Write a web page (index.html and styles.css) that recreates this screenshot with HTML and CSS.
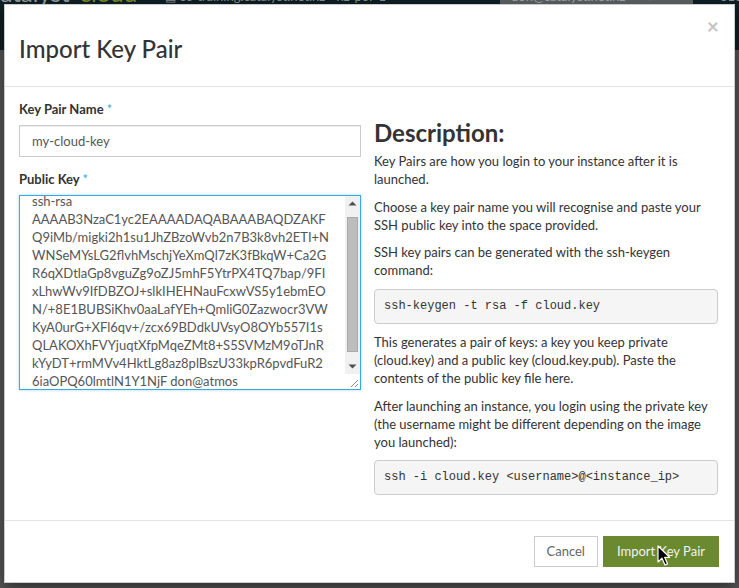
FILE: index.html
```html
<!DOCTYPE html>
<html lang="en">
<head>
<meta charset="utf-8">
<title>Import Key Pair</title>
<link rel="stylesheet" href="styles.css">
</head>
<body>
<header class="navbar">
  <div class="brand"><span class="brand-a">catalyst</span><span class="brand-b">cloud</span></div>
  <div class="project"><span class="proj-icon">&#9636;</span> os-training.catalyst.net.nz - nz-por-1</div>
  <div class="user">don@catalyst.net.nz <span class="caret">&#9662;</span></div>
  <div class="extra">318</div>
</header>

<div class="modal">
  <div class="modal-header">
    <h1 class="modal-title">Import Key Pair</h1>
    <button class="close" type="button">&times;</button>
  </div>
  <div class="modal-body">
    <div class="form-col">
      <div class="form-group">
        <label class="label">Key Pair Name <span class="req">*</span></label>
        <input class="input" type="text" value="my-cloud-key">
      </div>
      <div class="form-group">
        <label class="label">Public Key <span class="req">*</span></label>
        <div class="textarea-box">
          <textarea class="key-text" wrap="off" spellcheck="false">ssh-rsa
AAAAB3NzaC1yc2EAAAADAQABAAABAQDZAKF
Q9iMb/migki2h1su1JhZBzoWvb2n7B3k8vh2ETI+N
WNSeMYsLG2flvhMschjYeXmQl7zK3fBkqW+Ca2G
R6qXDtlaGp8vguZg9oZJ5mhF5YtrPX4TQ7bap/9FI
xLhwWv9IfDBZOJ+slkIHEHNauFcxwVS5y1ebmEO
N/+8E1BUBSiKhv0aaLafYEh+QmliG0Zazwocr3VW
KyA0urG+XFl6qv+/zcx69BDdkUVsyO8OYb557I1s
QLAKOXhFVYjuqtXfpMqeZMt8+S5SVMzM9oTJnR
kYyDT+rmMVv4HktLg8az8plBszU33kpR6pvdFuR2
6iaOPQ60lmtlN1Y1NjF don@atmos</textarea>
          <div class="scrollbar" aria-hidden="true">
            <div class="sb-btn">
              <svg width="15" height="15" viewBox="0 0 15 15"><polygon points="3.5,9.5 11.5,9.5 7.5,5.5" fill="#505050"/></svg>
            </div>
            <div class="sb-track"><div class="sb-thumb"></div></div>
            <div class="sb-btn">
              <svg width="15" height="15" viewBox="0 0 15 15"><polygon points="3.5,5.5 11.5,5.5 7.5,9.5" fill="#505050"/></svg>
            </div>
            <div class="sb-resizer">
              <svg width="15" height="15" viewBox="0 0 15 15"><path d="M13 6 L6 13 M13 10 L10 13" stroke="#8a8a8a" stroke-width="1" fill="none"/></svg>
            </div>
          </div>
        </div>
      </div>
    </div>
    <div class="desc-col">
      <h3 class="desc-title">Description:</h3>
      <p>Key Pairs are how you login to your instance after it is launched.</p>
      <p>Choose a key pair name you will recognise and paste your SSH public key into the space provided.</p>
      <p>SSH key pairs can be generated with the ssh-keygen command:</p>
      <pre class="code">ssh-keygen -t rsa -f cloud.key</pre>
      <p>This generates a pair of keys: a key you keep private (cloud.key) and a public key (cloud.key.pub). Paste the contents of the public key file here.</p>
      <p>After launching an instance, you login using the private key (the username might be different depending on the image you launched):</p>
      <pre class="code">ssh -i cloud.key &lt;username&gt;@&lt;instance_ip&gt;</pre>
    </div>
  </div>
  <div class="modal-footer">
    <button class="btn btn-default" type="button">Cancel</button>
    <button class="btn btn-primary" type="button">Import Key Pair</button>
  </div>
</div>

<svg class="cursor" width="14" height="22" viewBox="0 0 14 22" aria-hidden="true">
  <path d="M1 1 L1 17 L5 13.2 L8 20 L10.6 18.9 L7.7 12.3 L12.6 12.3 Z" fill="#000" stroke="#fff" stroke-width="1.2" stroke-linejoin="round"/>
</svg>

<script src="script.js"></script>
</body>
</html>
```

FILE: styles.css
```css
* {
  box-sizing: border-box;
}

html,
body {
  margin: 0;
  height: 100%;
}

body {
  background: #575757;
  font-family: Lato, "Noto Sans", "Liberation Sans", sans-serif;
  font-size: 13px;
  line-height: 18px;
  color: #333;
  overflow: hidden;
}

/* page navbar (behind the backdrop) */
.navbar {
  height: 50px;
  background: #0f2026;
  display: flex;
  align-items: flex-start;
  color: #8e979a;
  white-space: nowrap;
}

.brand {
  flex: none;
  width: 176px;
  margin: -19px 0 0 -11px;
  font-size: 24px;
  line-height: 24px;
}

.brand-a {
  color: #9aa2a5;
}

.brand-b {
  color: #7f8f2c;
  margin-left: 10px;
}

.project {
  flex: none;
  width: 335px;
  margin-top: -13px;
  font-size: 13px;
  line-height: 18px;
  color: #8c9496;
}

.proj-icon {
  font-size: 12px;
}

.user {
  flex: none;
  width: 193px;
  height: 17px;
  margin-top: -13px;
  padding: 0 11px;
  background: #5e6466;
  color: #a6abad;
  font-size: 13px;
  line-height: 18px;
}

.caret {
  margin-left: 18px;
}

.extra {
  flex: none;
  margin: -13px 0 0 27px;
  font-size: 13px;
  line-height: 18px;
}

/* modal */
.modal {
  position: absolute;
  top: 4px;
  left: 4px;
  width: 731px;
  background: #fff;
  border: 1px solid rgba(0, 0, 0, 0.2);
  box-shadow: 0 5px 15px rgba(0, 0, 0, 0.5);
}

.modal-header {
  display: flex;
  justify-content: space-between;
  align-items: flex-start;
  padding: 10px 15px 24px 14px;
  border-bottom: 1px solid #e5e5e5;
}

.modal-title {
  margin: 20.6px 0 0;
  font-size: 24px;
  line-height: 26.4px;
  font-weight: 500;
  color: #333;
}

.close {
  margin: 0;
  padding: 0;
  background: none;
  border: 0;
  font-family: Lato, "Noto Sans", sans-serif;
  font-size: 21px;
  line-height: 21px;
  font-weight: 700;
  color: #c4c4c4;
}

.modal-body {
  display: grid;
  grid-template-columns: 342px 1fr;
  column-gap: 13px;
  padding: 13px 16px 15px 14px;
}

.form-group {
  margin-bottom: 13px;
}

.label {
  display: block;
  margin-bottom: 7px;
  font-weight: 700;
  color: #333;
}

.req {
  color: #3ea8de;
  font-weight: 400;
}

.input {
  display: block;
  width: 100%;
  height: 32px;
  padding: 6px 12px;
  border: 1px solid #cccccc;
  border-radius: 0;
  background: #fff;
  color: #555;
  font-family: Lato, "Noto Sans", sans-serif;
  font-size: 13px;
  line-height: 18px;
  box-shadow: inset 0 1px 1px rgba(0, 0, 0, 0.075);
  outline: none;
}

/* textarea with a classic scrollbar */
.textarea-box {
  display: flex;
  height: 195px;
  border: 1px solid #3ba8e4;
  background: #fff;
  box-shadow: 0 0 3px rgba(59, 168, 228, 0.45);
}

.key-text {
  flex: 1;
  min-width: 0;
  height: 100%;
  margin: 0;
  padding: 6px 12px;
  border: 0;
  outline: none;
  resize: none;
  background: transparent;
  color: #555;
  font-family: Lato, "Noto Sans", sans-serif;
  font-size: 13px;
  line-height: 18px;
  white-space: pre;
  overflow: hidden;
}

.scrollbar {
  flex: none;
  width: 15px;
  display: flex;
  flex-direction: column;
  background: #f1f1f1;
}

.sb-btn,
.sb-resizer {
  flex: none;
  height: 15px;
  display: flex;
}

.sb-track {
  flex: 1;
  padding: 6px 2px 0;
}

.sb-thumb {
  height: 135px;
  background: #bdbdbd;
  border: 1px solid #a9a9a9;
}

.sb-resizer {
  background: #fff;
}

.desc-title {
  margin: 20px 0 6px;
  font-size: 24px;
  line-height: 26.4px;
  font-weight: 700;
  color: #333;
}

.desc-col p {
  margin: 0 0 9.5px;
}

.code {
  margin: 0 0 9.5px;
  padding: 8px 9px;
  background: #f5f5f5;
  border: 1px solid #cccccc;
  border-radius: 4px;
  font-family: "Liberation Mono", "DejaVu Sans Mono", monospace;
  font-size: 12px;
  line-height: 17px;
  color: #333;
  white-space: pre;
}

.desc-col .code:last-child {
  margin-bottom: 10px;
}

.modal-footer {
  display: flex;
  justify-content: flex-end;
  gap: 5px;
  padding: 15px 15px 15px;
  border-top: 1px solid #e5e5e5;
}

.btn {
  margin: 0;
  padding: 6px 12px;
  border: 1px solid #cccccc;
  border-radius: 0;
  font-family: Lato, "Noto Sans", sans-serif;
  font-size: 13px;
  line-height: 17px;
  font-weight: 400;
}

.btn-default {
  background: #fff;
  color: #666;
}

.btn-primary {
  background: #6b892e;
  border-color: #6b892e;
  color: #f2f2f2;
  padding: 6px 13px;
}

.cursor {
  position: absolute;
  left: 657px;
  top: 545px;
}
```

FILE: script.js
```js
var keyText = document.querySelector('.key-text');
if (keyText) {
  keyText.scrollTop = 10;
}
```
